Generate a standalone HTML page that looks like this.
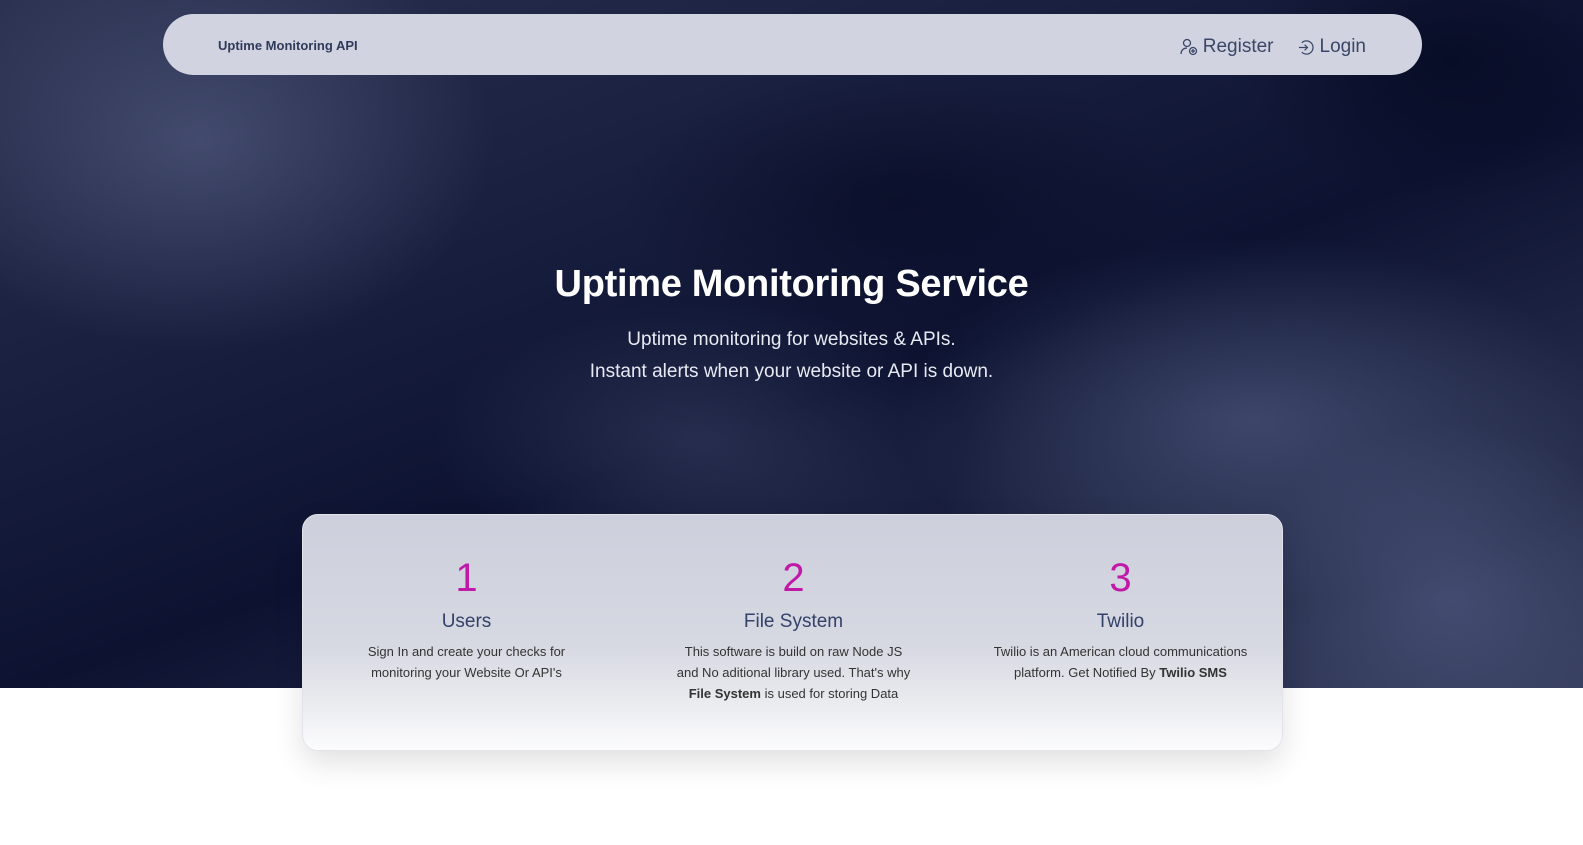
<!DOCTYPE html>
<html><head><meta charset="utf-8"><style>
*{margin:0;padding:0;box-sizing:border-box}
body{width:1583px;height:845px;overflow:hidden;background:#fff;font-family:"Liberation Sans",sans-serif;position:relative}
.hero{position:absolute;left:0;top:0;width:1583px;height:688px;overflow:hidden;
background:
radial-gradient(ellipse 500px 260px at 1250px 420px,rgba(90,100,140,.55),transparent 70%),
radial-gradient(ellipse 420px 300px at 200px 140px,rgba(90,98,135,.6),transparent 70%),
radial-gradient(ellipse 380px 200px at 700px 440px,rgba(70,78,115,.45),transparent 70%),
radial-gradient(ellipse 300px 250px at 1450px 600px,rgba(85,95,135,.55),transparent 70%),
radial-gradient(ellipse 300px 200px at 1450px 60px,rgba(5,10,35,.8),transparent 70%),
radial-gradient(ellipse 400px 200px at 900px 200px,rgba(5,10,35,.6),transparent 70%),
linear-gradient(160deg,#2a3150 0%,#1a2040 30%,#0c1230 55%,#262d4c 80%,#353c5c 100%)}
.nav{position:absolute;left:163px;top:14px;width:1259px;height:61px;border-radius:31px;background:#d1d4e0;}
.brand{position:absolute;left:55px;top:24px;font-size:13px;font-weight:bold;color:#2f3a5a}
.links{position:absolute;right:56px;top:22px;font-size:19px;color:#3b4668;display:flex;gap:24px}
.links span{display:flex;align-items:center;gap:5px}
h1{position:absolute;top:263px;width:1583px;text-align:center;color:#fff;font-size:38px;font-weight:bold;letter-spacing:-0.3px}
.sub{position:absolute;top:324px;width:1583px;text-align:center;color:#e8eaf2;font-size:19px;line-height:32px}
.card{position:absolute;left:302px;top:514px;width:981px;height:237px;border-radius:16px;
background:linear-gradient(180deg,#cdd0dc 0%,#d6d8e2 55%,#e6e7ec 75%,#fcfcfd 100%);box-shadow:0 12px 30px rgba(0,0,0,.12);border:1px solid #e2e4ec}
.col{position:absolute;top:38px;width:327px;text-align:center}
.num{font-size:40px;color:#c019a8;line-height:50px}
.tt{font-size:19px;color:#34426a;margin-top:8px}
.tx{font-size:13px;color:#333;line-height:21px;margin-top:8px;padding:0 45px}
</style></head><body>
<div class="hero"></div>
<div class="nav"><div class="brand">Uptime Monitoring API</div>
<div class="links"><span><svg width="18" height="18" viewBox="0 0 18 18" fill="none" stroke="#3b4668" stroke-width="1.3"><circle cx="7" cy="5" r="3.5"/><path d="M1 16c0-4 3-6 6-6"/><circle cx="13" cy="13" r="3.5"/><path d="M13 11v4M11 13h4"/></svg>Register</span>
<span><svg width="17" height="17" viewBox="0 0 18 18" fill="none" stroke="#3b4668" stroke-width="1.3"><path d="M4 4a7 7 0 1 1 0 10"/><path d="M1 9h9M7 6l3 3-3 3"/></svg>Login</span></div></div>
<h1>Uptime Monitoring Service</h1>
<div class="sub">Uptime monitoring for websites &amp; APIs.<br>Instant alerts when your website or API is down.</div>
<div class="card">
<div class="col" style="left:0"><div class="num">1</div><div class="tt">Users</div><div class="tx">Sign In and create your checks for monitoring your Website Or API's</div></div>
<div class="col" style="left:327px"><div class="num">2</div><div class="tt">File System</div><div class="tx">This software is build on raw Node JS and No aditional library used. That's why <b>File System</b> is used for storing Data</div></div>
<div class="col" style="left:654px"><div class="num">3</div><div class="tt">Twilio</div><div class="tx" style="padding:0 25px">Twilio is an American cloud communications platform. Get Notified By <b>Twilio SMS</b></div></div>
</div>
</body></html>
